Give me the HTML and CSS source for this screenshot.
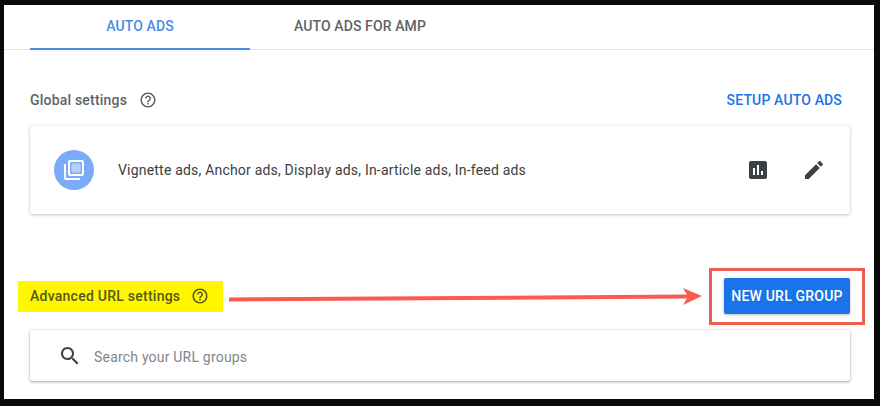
FILE: index.html
```html
<!DOCTYPE html>
<html lang="en">
<head>
<meta charset="utf-8">
<title>Auto ads</title>
<link rel="stylesheet" href="styles.css">
</head>
<body>
<main class="panel">
  <nav class="tabs">
    <div class="tab tab-active">AUTO ADS</div>
    <div class="tab">AUTO ADS FOR AMP</div>
  </nav>

  <section class="global">
    <div class="section-head">
      <div class="title">
        <span>Global settings</span>
        <svg class="help" viewBox="0 0 24 24"><path d="M11 18h2v-2h-2v2zm1-16C6.48 2 2 6.48 2 12s4.48 10 10 10 10-4.48 10-10S17.52 2 12 2zm0 18c-4.41 0-8-3.59-8-8s3.59-8 8-8 8 3.59 8 8-3.59 8-8 8zm0-14c-2.21 0-4 1.79-4 4h2c0-1.1.9-2 2-2s2 .9 2 2c0 2-3 1.75-3 5h2c0-2.25 3-2.5 3-5 0-2.21-1.79-4-4-4z"/></svg>
      </div>
      <a class="link">SETUP AUTO ADS</a>
    </div>
    <div class="card summary">
      <span class="avatar">
        <svg viewBox="0 0 24 24"><path d="M4 6H2v14c0 1.1.9 2 2 2h14v-2H4V6zm16-4H8c-1.1 0-2 .9-2 2v12c0 1.1.9 2 2 2h12c1.1 0 2-.9 2-2V4c0-1.1-.9-2-2-2zm0 14H8V4h12v12z"/><path class="inner" d="M9.5 5.5h9v9h-9z"/></svg>
      </span>
      <span class="summary-text">Vignette ads, Anchor ads, Display ads, In-article ads, In-feed ads</span>
      <svg class="action" viewBox="0 0 24 24"><path d="M19 3H5c-1.1 0-2 .9-2 2v14c0 1.1.9 2 2 2h14c1.1 0 2-.9 2-2V5c0-1.100-.9-2-2-2zM9 17H7v-7h2v7zm4 0h-2V7h2v10zm4 0h-2v-4h2v4z"/></svg>
      <svg class="action" viewBox="0 0 24 24"><path d="M3 17.250V21h3.750L17.810 9.940l-3.750-3.750L3 17.250zM20.710 7.040c.39-.39.39-1.020 0-1.410l-2.340-2.340c-.39-.39-1.020-.39-1.410 0l-1.830 1.830 3.750 3.750 1.830-1.830z"/></svg>
    </div>
  </section>

  <section class="advanced">
    <div class="section-head advanced-head">
      <div class="title title-marked">
        <span>Advanced URL settings</span>
        <svg class="help" viewBox="0 0 24 24"><path d="M11 18h2v-2h-2v2zm1-16C6.48 2 2 6.48 2 12s4.48 10 10 10 10-4.48 10-10S17.52 2 12 2zm0 18c-4.41 0-8-3.59-8-8s3.59-8 8-8 8 3.59 8 8-3.59 8-8 8zm0-14c-2.210 0-4 1.79-4 4h2c0-1.1.9-2 2-2s2 .9 2 2c0 2-3 1.75-3 5h2c0-2.25 3-2.5 3-5 0-2.21-1.79-4-4-4z"/></svg>
      </div>
      <button class="primary" type="button">NEW URL GROUP</button>
    </div>
    <div class="card search">
      <svg class="search-icon" viewBox="0 0 24 24"><path d="M15.500 14h-.79l-.28-.27C15.410 12.590 16 11.110 16 9.500 16 5.910 13.090 3 9.500 3S3 5.910 3 9.500 5.910 16 9.500 16c1.610 0 3.090-.59 4.230-1.570l.27.28v.79l5 4.990L20.490 19l-4.990-5zm-6 0C7.010 14 5 11.990 5 9.500S7.010 5 9.500 5 14 7.010 14 9.500 11.990 14 9.500 14z"/></svg>
      <span class="search-text">Search your URL groups</span>
    </div>
  </section>

  <svg class="arrow" viewBox="0 0 480 20"><path d="M0 11.500 L458 8.500" /><polygon points="454,0 473,8 454,17 459,8.500"/></svg>
  <div class="callout"></div>
</main>
</body>
</html>
```
FILE: styles.css
```css
* { box-sizing: border-box; }
html, body { margin: 0; height: 100%; }
body {
  background: #0a0a0a;
  font-family: Roboto, "Liberation Sans", sans-serif;
  overflow: hidden;
}
.panel {
  position: relative;
  width: 870px;
  height: 394px;
  margin: 5px 0 0 4px;
  background: #fff;
  overflow: hidden;
}
.tabs {
  display: flex;
  height: 45px;
  padding-left: 26px;
  border-bottom: 1px solid #e4e5e7;
}
.tab {
  width: 220px;
  height: 45px;
  padding-top: 13px;
  font-size: 14px;
  line-height: 16px;
  font-weight: 500;
  letter-spacing: 0.1px;
  text-align: center;
  color: #5f6368;
}
.tab-active {
  color: #4a8ce6;
  border-bottom: 2px solid #4a8ce6;
}
.global { padding: 38px 24px 0 26px; }
.section-head {
  display: flex;
  align-items: center;
  justify-content: space-between;
  height: 24px;
}
.title {
  display: flex;
  align-items: center;
  gap: 12px;
  font-size: 14px;
  font-weight: 500;
  letter-spacing: 0.2px;
  color: #5f6368;
}
.help { width: 18px; height: 18px; fill: #5f6368; }
.link {
  margin-right: 8px;
  font-size: 14px;
  font-weight: 500;
  letter-spacing: 0.15px;
  color: #1a73e8;
}
.card {
  display: flex;
  align-items: center;
  background: #fff;
  border-radius: 2px;
  box-shadow: 0 0 2px rgba(60, 64, 67, .12), 0 1px 3px rgba(60, 64, 67, .3);
}
.summary {
  height: 88px;
  margin-top: 14px;
  padding: 0 24px;
}
.avatar {
  display: flex;
  align-items: center;
  justify-content: center;
  width: 40px;
  height: 40px;
  border-radius: 50%;
  background: #7baaf7;
}
.avatar svg { width: 24px; height: 24px; fill: #fff; }
.avatar .inner { fill: #fff; opacity: .45; }
.summary-text {
  flex: 1;
  margin-left: 24px;
  font-size: 14px;
  letter-spacing: 0.2px;
  color: #3c4043;
}
.action { width: 24px; height: 24px; fill: #3c4043; margin-left: 32px; }
.advanced { padding: 64px 24px 0 26px; }
.advanced-head { height: 36px; }
.title-marked {
  height: 31px;
  gap: 11px;
  margin-left: -12px;
  padding: 0 14px 0 12px;
  background: #fff600;
  letter-spacing: 0.25px;
  color: #55581c;
}
.title-marked .help { fill: #55581c; }
.primary {
  width: 126px;
  height: 36px;
  padding: 0;
  border: 0;
  border-radius: 2px;
  background: #1a73e8;
  color: #fff;
  font: 500 14px Roboto, "Liberation Sans", sans-serif;
  letter-spacing: 0.2px;
  box-shadow: 0 1px 3px rgba(60, 64, 67, .35);
}
.search {
  height: 51px;
  margin-top: 16px;
  padding: 0 28px;
  box-shadow: 0 0 2px rgba(60, 64, 67, .12), 0 1px 3px rgba(60, 64, 67, .45);
}
.search-icon { width: 24px; height: 24px; fill: #3c4043; }
.search-text {
  margin: 2px 0 0 12px;
  font-size: 14px;
  letter-spacing: 0.2px;
  color: #80868b;
}
.arrow {
  position: absolute;
  left: 225px;
  top: 283px;
  width: 480px;
  height: 20px;
}
.arrow path { fill: none; stroke: #fb5c50; stroke-width: 4; stroke-linecap: round; }
.arrow polygon { fill: #fb5c50; }
.callout {
  position: absolute;
  left: 705px;
  top: 263px;
  width: 156px;
  height: 57px;
  border: 3px solid #e8604f;
}
```
